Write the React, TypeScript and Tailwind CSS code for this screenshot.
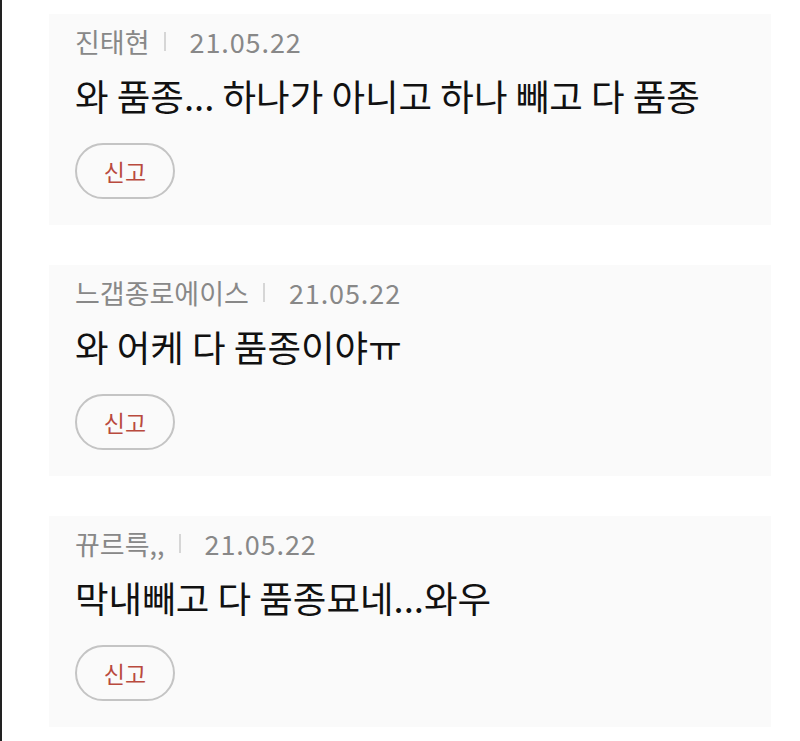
const comments = [
  { author: "진태현", date: "21.05.22", body: "와 품종... 하나가 아니고 하나 빼고 다 품종" },
  { author: "느갭종로에이스", date: "21.05.22", body: "와 어케 다 품종이야ㅠ" },
  { author: "뀨르륵,,", date: "21.05.22", body: "막내빼고 다 품종묘네...와우" },
];

function CommentCard({ author, date, body }: { author: string; date: string; body: string }) {
  return (
    <div className="flex h-[211px] flex-col bg-[#fafafa] px-[26px] pt-[12px]">
      <div className="flex h-[30px] items-center text-[27px] leading-none text-[#888]">
        <span>{author}</span>
        <span className="mx-[14px] h-[19px] w-[2px] bg-[#d6d6d6]" />
        <span className="pl-[10px] tracking-[0.9px]">{date}</span>
      </div>
      <p className="mt-[20px] text-[36.5px] leading-[40px] text-[#111]">{body}</p>
      <div className="mt-[27px]">
        <button className="flex h-[56px] w-[100px] items-center justify-center rounded-full border-2 border-[#c4c4c4] text-[23px] text-[#b94a3e]">
          신고
        </button>
      </div>
    </div>
  );
}

export default function App() {
  return (
    <div
      className="flex h-[741px] w-[800px] flex-col gap-[40px] border-l-2 border-[#222] bg-white pt-[14px] pr-[29px] pl-[47px]"
      style={{ fontFamily: '"Noto Sans CJK KR", "Noto Sans", sans-serif' }}
    >
      {comments.map((c) => (
        <CommentCard key={c.author} {...c} />
      ))}
    </div>
  );
}
